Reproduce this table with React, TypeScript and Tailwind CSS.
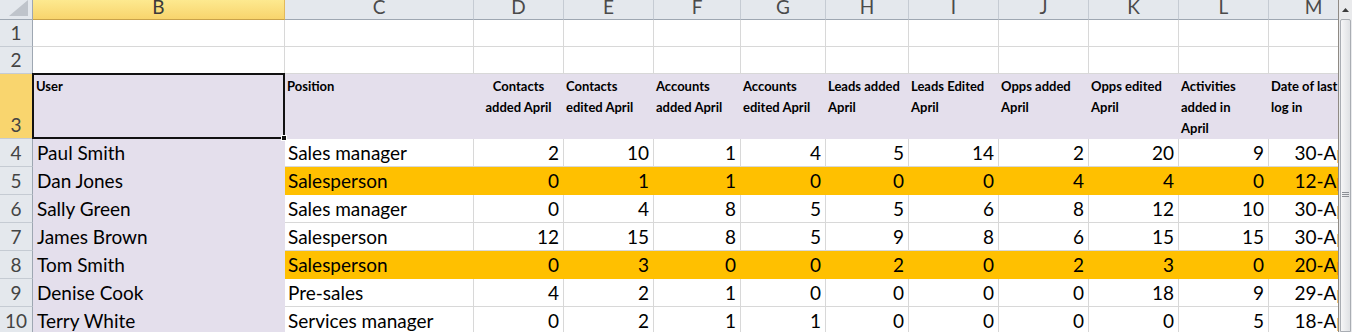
import React from 'react';

type Row = {
  name: string;
  position: string;
  values: number[];
  date: string;
  flagged?: boolean;
};

const rows: Row[] = [
  { name: 'Paul Smith', position: 'Sales manager', values: [2, 10, 1, 4, 5, 14, 2, 20, 9], date: '30-Apr' },
  { name: 'Dan Jones', position: 'Salesperson', values: [0, 1, 1, 0, 0, 0, 4, 4, 0], date: '12-Apr', flagged: true },
  { name: 'Sally Green', position: 'Sales manager', values: [0, 4, 8, 5, 5, 6, 8, 12, 10], date: '30-Apr' },
  { name: 'James Brown', position: 'Salesperson', values: [12, 15, 8, 5, 9, 8, 6, 15, 15], date: '30-Apr' },
  { name: 'Tom Smith', position: 'Salesperson', values: [0, 3, 0, 0, 2, 0, 2, 3, 0], date: '20-Apr', flagged: true },
  { name: 'Denise Cook', position: 'Pre-sales', values: [4, 2, 1, 0, 0, 0, 0, 18, 9], date: '29-Apr' },
  { name: 'Terry White', position: 'Services manager', values: [0, 2, 1, 1, 0, 0, 0, 0, 5], date: '18-Apr' },
];

const letters = ['B', 'C', 'D', 'E', 'F', 'G', 'H', 'I', 'J', 'K', 'L', 'M'];

// header labels for D..M, one entry per line
const headings: string[][] = [
  ['Contacts', 'added April'],
  ['Contacts', 'edited April'],
  ['Accounts', 'added April'],
  ['Accounts', 'edited April'],
  ['Leads added', 'April'],
  ['Leads Edited', 'April'],
  ['Opps added', 'April'],
  ['Opps edited', 'April'],
  ['Activities', 'added in', 'April'],
  ['Date of last', 'log in'],
];

const rowHdr =
  'flex items-end justify-center bg-[#e4e8ed] border-r border-b border-r-[#9ea7b2] border-b-[#c5cbd3] text-[#444] text-[19px] leading-[27px]';
const white = 'bg-white border-r border-b border-[#d8d8d8]';
const orange = 'bg-[#ffc000] border-r border-b border-[#ffc000]';
const lavender = 'bg-[#e4dfec] border-r border-b border-[#e4dfec]';

function Scrollbar() {
  return (
    <div className="w-[14px] shrink-0 flex flex-col border-l border-[#8f8a84] bg-[#e9eaec]">
      <div className="h-[19px] flex items-center justify-center">
        <svg width="7" height="4" viewBox="0 0 7 4">
          <path d="M0 4 L3.5 0 L7 4 Z" fill="#3c3c3c" />
        </svg>
      </div>
      <div className="flex-1 mx-[1px] border border-[#a9adb3] rounded-t-[2px] bg-gradient-to-r from-[#f6f6f7] to-[#dfe1e4] flex justify-center">
        <div className="mt-[172px] flex flex-col gap-[1px]">
          <div className="w-[7px] h-px bg-[#8d9096]" />
          <div className="w-[7px] h-px bg-[#8d9096]" />
          <div className="w-[7px] h-px bg-[#8d9096]" />
        </div>
      </div>
    </div>
  );
}

export default function App() {
  return (
    <div className="w-[1352px] h-[332px] overflow-hidden flex bg-white font-['Lato',sans-serif] text-black">
      <div className="flex-1 overflow-hidden">
        <div className="grid w-[1359px] grid-cols-[33px_252px_189px_90px_90px_87px_85px_83px_90px_90px_90px_90px_90px] grid-rows-[20px_27px_27px_65px_repeat(7,28px)]">
          {/* Column headers */}
          <div className="bg-[#e4e8ed] border-r border-b border-[#9ea7b2] flex items-end justify-end pr-[4px] pb-[3px]">
            <svg width="19" height="16" viewBox="0 0 19 16">
              <path d="M19 0 L19 16 L0 16 Z" fill="#bfc4cb" />
            </svg>
          </div>
          {letters.map((l) => (
            <div
              key={l}
              className={`overflow-hidden border-b border-r text-[19px] text-center ${
                l === 'B'
                  ? 'bg-gradient-to-b from-[#fde98f] to-[#f8d46c] border-r-[#e2b95a] border-b-[#c9a24a] text-[#3a3a3a]'
                  : 'bg-[#e4e8ed] border-r-[#c5cbd3] border-b-[#9ea7b2] text-[#4a4a4a]'
              }`}
            >
              <div className="-mt-[4px] leading-[22px]">{l}</div>
            </div>
          ))}

          {/* Rows 1 and 2 */}
          {[1, 2].map((n) => (
            <React.Fragment key={n}>
              <div className={rowHdr}>{n}</div>
              {letters.map((l) => (
                <div key={l} className={white} />
              ))}
            </React.Fragment>
          ))}

          {/* Row 3: headings */}
          <div className="flex items-end justify-center bg-[#f9d56e] border-r border-b border-r-[#d9ad4c] border-b-[#c5cbd3] text-[#444] text-[19px] leading-[27px]">
            3
          </div>
          <div className={`${lavender} relative`}>
            <div className="absolute -left-px -top-px w-[253px] h-[66px] border-2 border-[#111]" />
            <div className="absolute left-[248px] top-[61px] w-[6px] h-[6px] bg-[#111] border border-white" />
            <div className="pl-[3px] pt-[2px] text-[13px] font-bold leading-[21px]">User</div>
          </div>
          <div className={`${lavender} pl-[2px] pt-[2px] text-[13px] font-bold leading-[21px]`}>Position</div>
          {headings.map((lines, i) => (
            <div
              key={i}
              className={`${lavender} overflow-hidden whitespace-nowrap px-[2px] pt-[2px] text-[13px] font-bold leading-[21px] ${
                i === 0 ? 'text-center' : 'text-left'
              }`}
            >
              {lines.map((t) => (
                <div key={t}>{t}</div>
              ))}
            </div>
          ))}

          {/* Data rows */}
          {rows.map((r, i) => {
            const fill = r.flagged ? orange : white;
            return (
              <React.Fragment key={r.name}>
                <div className={rowHdr}>{i + 4}</div>
                <div className={`${lavender} pl-[4px] text-[19px] leading-[27px] whitespace-nowrap`}>{r.name}</div>
                <div className={`${fill} pl-[3px] text-[19px] leading-[27px] whitespace-nowrap`}>{r.position}</div>
                {r.values.map((v, j) => (
                  <div key={j} className={`${fill} pr-[4px] text-right text-[19px] leading-[27px]`}>
                    {v}
                  </div>
                ))}
                <div className={`${fill} pr-[4px] text-right text-[19px] leading-[27px]`}>{r.date}</div>
              </React.Fragment>
            );
          })}
        </div>
      </div>
      <Scrollbar />
    </div>
  );
}
